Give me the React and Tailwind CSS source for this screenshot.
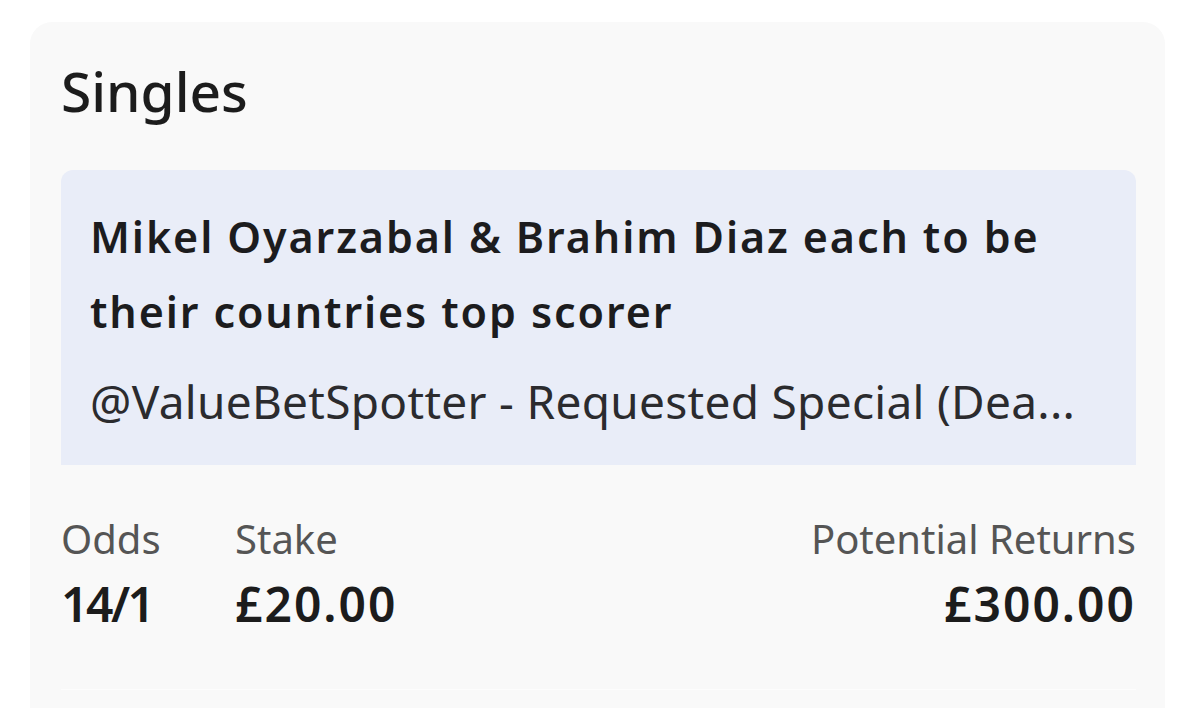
export default function App() {
  const font = { fontFamily: '"Noto Sans", "Open Sans", Arial, sans-serif' };
  return (
    <div className="h-[708px] w-[1200px] overflow-hidden bg-white pt-[22px] pl-[30px]" style={font}>
      <div className="h-[720px] w-[1135px] rounded-[22px] bg-[#f9f9f9] pt-[41px] pl-[31px] pr-[29px]">
        <h2 className="mb-[51px] text-[55px] font-medium leading-[56px] text-[#1c1c1c]">Singles</h2>

        <div className="rounded-t-[12px] bg-[#e9edf8] pt-[29px] pb-[34px] pl-[29px] pr-[30px]">
          <div className="text-[43px] font-semibold leading-[75px] tracking-[1.9px] text-[#1c1c1e]">
            Mikel Oyarzabal &amp; Brahim Diaz each to be
            <br />
            their countries top scorer
          </div>
          <div className="mt-[22px] whitespace-nowrap text-[46px] leading-[60px] tracking-[0.3px] text-[#2b2b2e]">
            @ValueBetSpotter - Requested Special (Dea...
          </div>
        </div>

        <div className="mt-[50px] flex">
          <div className="w-[174px]">
            <div className="text-[40px] leading-[48px] text-[#555555]">Odds</div>
            <div className="mt-[13px] text-[48px] font-semibold leading-[56px] tracking-[-2.5px] text-[#1c1c1c]">14/1</div>
          </div>
          <div>
            <div className="text-[40px] leading-[48px] text-[#555555]">Stake</div>
            <div className="mt-[13px] text-[48px] font-semibold leading-[56px] tracking-[2px] text-[#1c1c1c]">£20.00</div>
          </div>
          <div className="ml-auto text-right">
            <div className="text-[40px] leading-[48px] text-[#555555]">Potential Returns</div>
            <div className="mt-[13px] text-[48px] font-semibold leading-[56px] tracking-[2px] text-[#1c1c1c]">£300.00</div>
          </div>
        </div>

        <div className="mt-[57px] border-t border-[#fdfdfd]" />
      </div>
    </div>
  );
}
